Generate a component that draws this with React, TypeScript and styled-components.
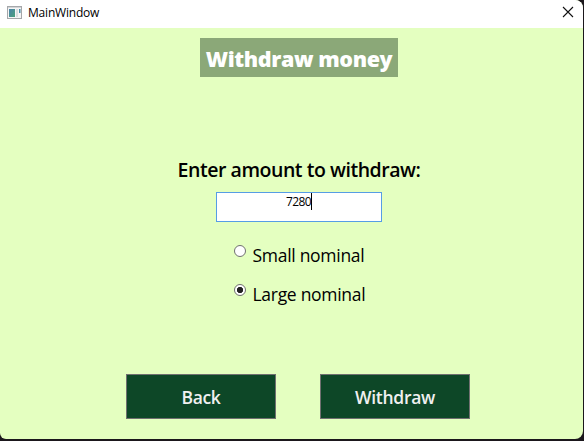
import React, { useState } from "react";
import styled, { createGlobalStyle } from "styled-components";

const GlobalStyle = createGlobalStyle`
  * { box-sizing: border-box; }
  html, body { margin: 0; background: #1b171c; overflow: hidden; }
  body { font-family: "Open Sans", "Noto Sans", sans-serif; color: #000; }
`;

const Window = styled.div`
  width: 583px;
  height: 439px;
  overflow: hidden;
  background: #e4ffc0;
  border-radius: 0 8px 8px 6px;
  display: flex;
  flex-direction: column;
`;

const TitleBar = styled.header`
  height: 28px;
  flex: none;
  background: #fff;
  display: flex;
  align-items: center;
  padding: 0 9px 4px 7px;
`;

const Caption = styled.span`
  font-size: 12px;
  line-height: 16px;
  letter-spacing: -0.2px;
  margin: 2px auto 0 6px;
`;

const CloseButton = styled.button`
  display: flex;
  padding: 0;
  border: 0;
  background: none;
`;

const Content = styled.main`
  flex: 1;
  display: flex;
  flex-direction: column;
  align-items: center;
  padding-left: 15px;
`;

const Heading = styled.h1`
  margin: 10px 0 0;
  width: 198px;
  height: 39px;
  line-height: 41px;
  background: #8ba878;
  color: #fff;
  text-align: center;
  white-space: nowrap;
  font-size: 21.5px;
  font-weight: 800;
  letter-spacing: -0.4px;
`;

const Prompt = styled.label`
  margin-top: 79px;
  height: 28px;
  line-height: 28px;
  font-size: 19.5px;
  font-weight: 600;
  letter-spacing: -0.46px;
  white-space: nowrap;
`;

const AmountField = styled.div`
  margin-top: 8px;
  width: 166px;
  height: 30px;
  border: 1px solid #569de5;
  background: #fff;
  display: flex;
  justify-content: center;
  font-size: 12px;
  line-height: 18px;
`;

const Amount = styled.span`
  height: 17px;
  border-right: 1px solid #000;
  letter-spacing: -0.6px;
`;

const Options = styled.div`
  width: 131px;
  margin-top: 20px;
  display: flex;
  flex-direction: column;
  gap: 11px;
`;

const Option = styled.div`
  height: 28px;
  display: flex;
  gap: 7px;
  font-size: 17.5px;
  line-height: 26px;
  letter-spacing: -0.29px;
  white-space: nowrap;
`;

const Dot = styled.span<{ $checked: boolean }>`
  width: 12px;
  height: 12px;
  flex: none;
  margin-top: 3px;
  border: 1px solid #707070;
  border-radius: 50%;
  background: ${(p) => (p.$checked ? "radial-gradient(circle, #212121 2.8px, #fff 3.5px)" : "#fff")};
`;

const Actions = styled.div`
  display: flex;
  gap: 44px;
  margin: 65px 2px 0 0;
`;

const ActionButton = styled.button`
  width: 150px;
  height: 45px;
  padding: 0;
  border: 1px solid #707070;
  background: #0d4727;
  color: #f0f0f0;
  font: 600 17.5px "Open Sans", sans-serif;
  letter-spacing: -0.3px;
`;

const AppIcon = () => (
  <svg width="15" height="13" viewBox="0 0 15 13">
    <defs>
      <linearGradient id="pane" x1="0" y1="0" x2="1" y2="1">
        <stop offset="0" stopColor="#4a83aa" />
        <stop offset="1" stopColor="#4ba07b" />
      </linearGradient>
    </defs>
    <rect x=".5" y=".5" width="14" height="12" fill="#f5f5f6" stroke="#a5a7aa" />
    <path d="M1 1.5H14" stroke="#d2d4d6" />
    <rect x="2" y="3" width="6" height="8" fill="url(#pane)" />
    <rect x="9" y="3" width="2" height="8" fill="#dadddf" />
    <rect x="12" y="3" width="1.5" height="4" fill="#4a8fa8" />
  </svg>
);

const options = ["Small nominal", "Large nominal"];

export default function App() {
  const [selected, setSelected] = useState("Large nominal");
  return (
    <>
      <GlobalStyle />
      <Window>
        <TitleBar>
          <AppIcon />
          <Caption>MainWindow</Caption>
          <CloseButton aria-label="Close">
            <svg width="12" height="12" viewBox="0 0 12 12" stroke="#111" strokeWidth="1.1">
              <path d="M1 1L11 11M11 1L1 11" />
            </svg>
          </CloseButton>
        </TitleBar>
        <Content>
          <Heading>Withdraw money</Heading>
          <Prompt>Enter amount to withdraw:</Prompt>
          <AmountField>
            <Amount>7280</Amount>
          </AmountField>
          <Options role="radiogroup">
            {options.map((name) => (
              <Option key={name} role="radio" aria-checked={name === selected} onClick={() => setSelected(name)}>
                <Dot $checked={name === selected} />
                {name}
              </Option>
            ))}
          </Options>
          <Actions>
            <ActionButton>Back</ActionButton>
            <ActionButton>Withdraw</ActionButton>
          </Actions>
        </Content>
      </Window>
    </>
  );
}
